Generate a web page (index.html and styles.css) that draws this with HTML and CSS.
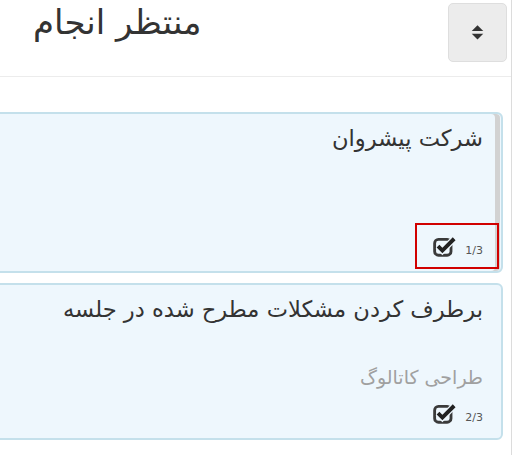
FILE: index.html
```html
<!DOCTYPE html>
<html lang="fa">
<head>
<meta charset="utf-8">
<link rel="stylesheet" href="styles.css">
</head>
<body>
<div class="panel">
  <div class="header">
    <h2 class="title">منتظر انجام</h2>
    <button class="sort-btn" type="button">
      <svg width="13" height="17" viewBox="0 0 12 16"><path d="M0.6 6.6 L6 1.2 L11.4 6.6 Z" fill="#333"/><path d="M0.6 9.2 L6 14.6 L11.4 9.2 Z" fill="#333"/></svg>
    </button>
  </div>
  <div class="cards">
    <div class="card card-first">
      <div class="card-title">شرکت پیشروان</div>
      <div class="card-foot">
        <span class="count">1/3</span>
        <svg class="check" width="24" height="21" viewBox="0 0 22 19"><rect x="1.5" y="3" width="15" height="14.5" rx="3.5" fill="none" stroke="#3a3a3a" stroke-width="2.6"/><path d="M4.6 9.2 L8.6 13.2 L19.4 2.4" fill="none" stroke="#eef7fd" stroke-width="6"/><path d="M4.6 9.2 L8.6 13.2 L19.4 2.4" fill="none" stroke="#222" stroke-width="3.6"/></svg>
      </div>
      <div class="highlight"></div>
    </div>
    <div class="card">
      <div class="card-title">برطرف کردن مشکلات مطرح شده در جلسه</div>
      <div class="card-sub">طراحی کاتالوگ</div>
      <div class="card-foot">
        <span class="count">2/3</span>
        <svg class="check" width="24" height="21" viewBox="0 0 22 19"><rect x="1.5" y="3" width="15" height="14.5" rx="3.5" fill="none" stroke="#3a3a3a" stroke-width="2.6"/><path d="M4.6 9.2 L8.6 13.2 L19.4 2.4" fill="none" stroke="#eef7fd" stroke-width="6"/><path d="M4.6 9.2 L8.6 13.2 L19.4 2.4" fill="none" stroke="#222" stroke-width="3.6"/></svg>
      </div>
    </div>
  </div>
</div>
</body>
</html>
```
FILE: styles.css
```css
html, body {
  margin: 0;
  padding: 0;
  background: #fff;
  overflow: hidden;
}
body {
  font-family: "DejaVu Sans", sans-serif;
  color: #333;
}
.panel {
  width: 511px;
  height: 455px;
  border-right: 1px solid #dcdcdc;
  overflow: hidden;
}
.header {
  display: flex;
  align-items: flex-start;
  justify-content: space-between;
  height: 76px;
  border-bottom: 1px solid #ececec;
  padding-left: 33px;
  padding-right: 4px;
}
.title {
  margin: 0;
  font-weight: normal;
  font-size: 34px;
  line-height: 44px;
  direction: rtl;
  color: #333;
}
.sort-btn {
  margin-top: 3px;
  width: 59px;
  height: 59px;
  padding: 0;
  background: #ececec;
  border: 1px solid #dedede;
  border-radius: 5px;
  display: flex;
  align-items: center;
  justify-content: center;
}
.cards {
  direction: rtl;
  margin-left: -20px;
  padding-top: 35px;
  padding-right: 8px;
  display: flex;
  flex-direction: column;
  gap: 10px;
}
.card {
  position: relative;
  min-height: 157px;
  background: #eef7fd;
  border: 2px solid #c4e0eb;
  border-radius: 6px;
  padding: 8px 18px 14px 18px;
  box-sizing: border-box;
  display: flex;
  flex-direction: column;
}
.card-first {
  min-height: 161px;
  box-shadow: inset -1px 0 0 #eef7fd, inset -6px 0 0 #d2d2d2;
}
.card-title {
  font-size: 22.6px;
  line-height: 32px;
  color: #333;
}
.card-sub {
  margin-top: 39px;
  font-size: 19px;
  line-height: 26px;
  color: #a0a0a0;
}
.card-foot {
  margin-top: auto;
  display: flex;
  align-items: flex-end;
  gap: 8px;
}
.count {
  direction: ltr;
  font-size: 11px;
  line-height: 12px;
  color: #555;
}
.check {
  display: block;
}
.highlight {
  position: absolute;
  right: 2px;
  bottom: 2px;
  width: 84px;
  height: 46px;
  box-sizing: border-box;
  border: 2px solid #d10000;
}
```
